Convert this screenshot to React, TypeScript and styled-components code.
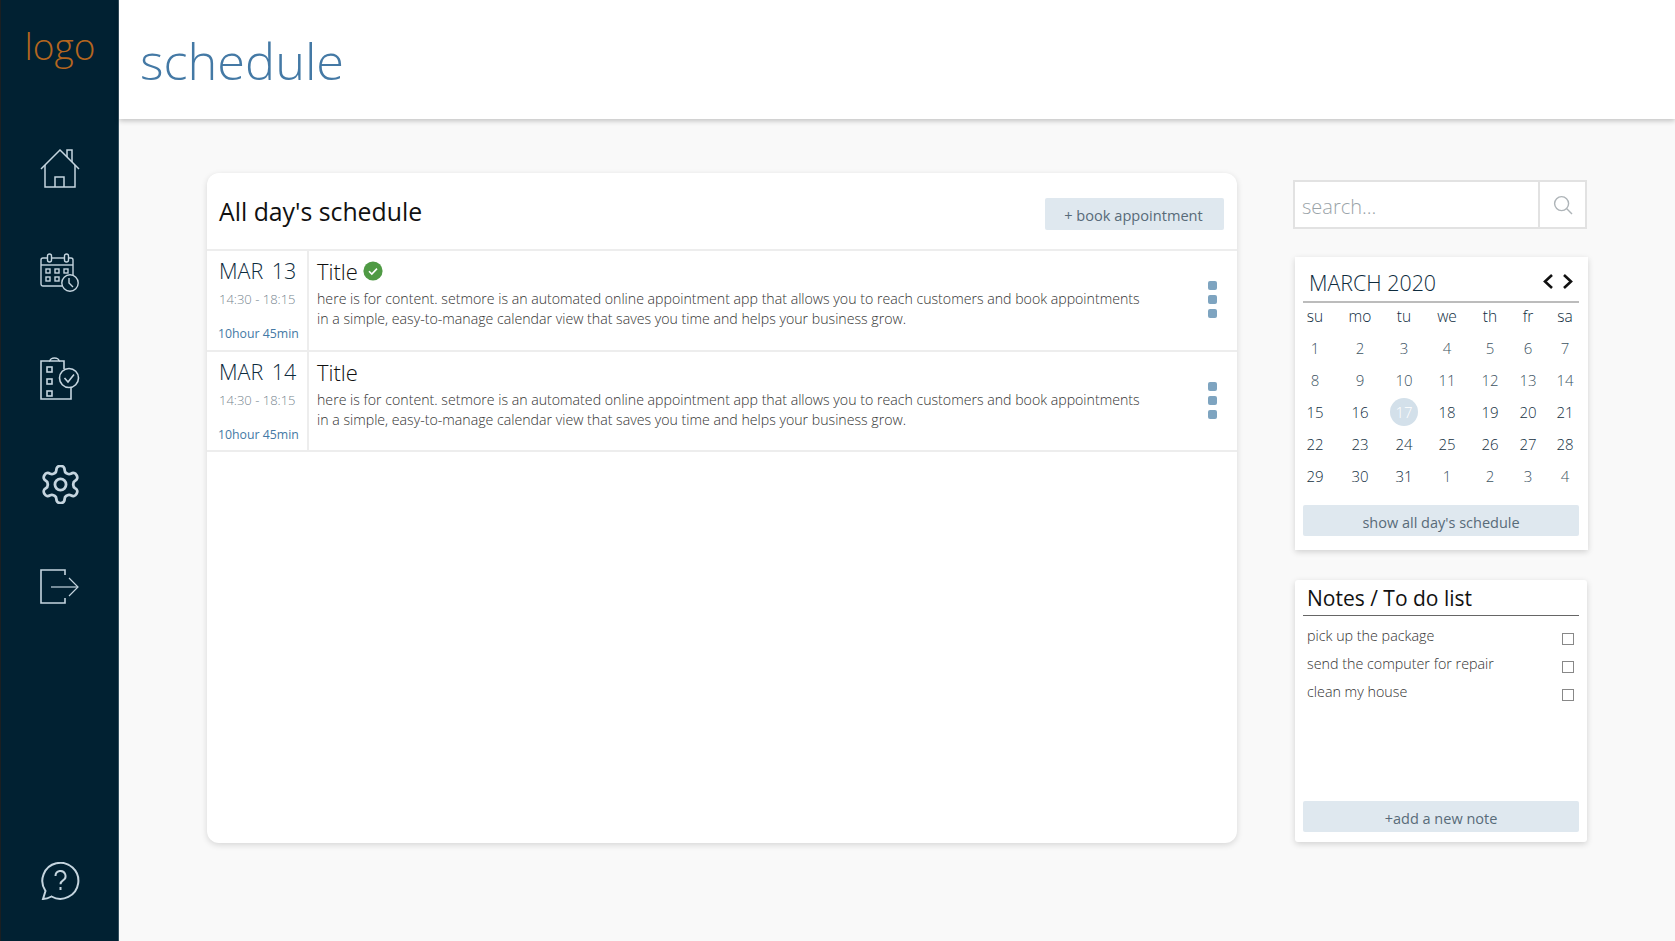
import React from "react";
import styled, { createGlobalStyle } from "styled-components";

const GlobalStyle = createGlobalStyle`
  html, body {
    margin: 0;
    padding: 0;
    height: 100%;
    background: #f9f9f9;
    font-family: "Open Sans", "Noto Sans", sans-serif;
  }
  #root {
    height: 100%;
  }
  * {
    box-sizing: border-box;
  }
`;

const appointments = [
  { id: 1, date: "MAR 13", done: true },
  { id: 2, date: "MAR 14", done: false },
];

const weekDays = ["su", "mo", "tu", "we", "th", "fr", "sa"];

const calendarDays = [
  1, 2, 3, 4, 5, 6, 7, 8, 9, 10, 11, 12, 13, 14, 15, 16, 17, 18, 19, 20, 21, 22, 23, 24, 25, 26, 27, 28, 29, 30, 31,
  1, 2, 3, 4,
];

const notes = ["pick up the package", "send the computer for repair", "clean my house"];

const HomeIcon = () => (
  <svg width="40" height="39" viewBox="0 0 40 39" fill="none" stroke="#c5d5df" strokeWidth="1.5">
    <path d="M1 20 L20 1 L39 20" />
    <path d="M5 16 V38 H35 V16" />
    <path d="M15 38 V28 H24 V38" />
    <path d="M27 8 V1 H32 V13" />
  </svg>
);

const CalendarIcon = () => (
  <svg width="40" height="39" viewBox="0 0 40 39" fill="none" stroke="#c5d5df" strokeWidth="1.4">
    <path d="M22 33 H3 a2 2 0 0 1 -2 -2 V7 a2 2 0 0 1 2 -2 H7" />
    <path d="M12 5 H24" />
    <path d="M29 5 H31 a2 2 0 0 1 2 2 V22" />
    <path d="M1 12 H33" />
    <rect x="7.5" y="1" width="4" height="8" rx="2" />
    <rect x="24.5" y="1" width="4" height="8" rx="2" />
    <rect x="6" y="16" width="4" height="4" />
    <rect x="15" y="16" width="4" height="4" />
    <rect x="24" y="16" width="4" height="4" />
    <rect x="6" y="24" width="4" height="4" />
    <rect x="15" y="24" width="4" height="4" />
    <circle cx="30" cy="30" r="8.2" />
    <path d="M29 25 V30 L33 34" />
  </svg>
);

const ChecklistIcon = () => (
  <svg width="40" height="43" viewBox="0 0 40 43" fill="none" stroke="#c5d5df" strokeWidth="1.6">
    <path d="M24 12 V4 H19" />
    <path d="M10 4 H1 V42 H31 V31" />
    <path d="M10 4 a4.5 3 0 0 1 9 0 Z" />
    <rect x="7" y="10" width="5" height="5" />
    <rect x="7" y="22" width="5" height="5" />
    <rect x="7" y="34" width="5" height="5" />
    <circle cx="29" cy="21" r="9.5" />
    <path d="M24.5 21 L28 25 L34 17.5" />
  </svg>
);

const GearIcon = () => (
  <svg width="39" height="39" viewBox="1.5 1.5 21 21" fill="none" stroke="#c5d5df" strokeWidth="1.5">
    <path d="M12.22 2h-.44a2 2 0 0 0-2 2v.18a2 2 0 0 1-1 1.73l-.43.25a2 2 0 0 1-2 0l-.15-.08a2 2 0 0 0-2.73.73l-.22.38a2 2 0 0 0 .73 2.73l.15.1a2 2 0 0 1 1 1.72v.51a2 2 0 0 1-1 1.74l-.15.09a2 2 0 0 0-.73 2.73l.22.38a2 2 0 0 0 2.73.73l.15-.08a2 2 0 0 1 2 0l.43.25a2 2 0 0 1 1 1.73V20a2 2 0 0 0 2 2h.44a2 2 0 0 0 2-2v-.18a2 2 0 0 1 1-1.73l.43-.25a2 2 0 0 1 2 0l.15.08a2 2 0 0 0 2.73-.73l.22-.39a2 2 0 0 0-.73-2.73l-.15-.08a2 2 0 0 1-1-1.74v-.5a2 2 0 0 1 1-1.74l.15-.09a2 2 0 0 0 .73-2.73l-.22-.38a2 2 0 0 0-2.73-.73l-.15.08a2 2 0 0 1-2 0l-.43-.25a2 2 0 0 1-1-1.73V4a2 2 0 0 0-2-2z" />
    <circle cx="12" cy="12" r="3" />
  </svg>
);

const LogoutIcon = () => (
  <svg width="40" height="35" viewBox="0 0 40 35" fill="none" stroke="#c5d5df" strokeWidth="1.6">
    <path d="M25 6 V1 H1 V34 H25 V29" />
    <path d="M11 18 H38" strokeWidth="1.2" />
    <path d="M29 9 L38 18 L29 27" strokeWidth="1.2" />
  </svg>
);

const HelpIcon = () => (
  <svg width="39" height="38" viewBox="0 0 39 38" fill="none" stroke="#c5d5df" strokeWidth="2">
    <path d="M2 37 L4.5 29 A18 18 0 1 1 10.5 34.5 Q6 37 2 37 Z" />
    <path d="M14.5 14 a5 5 0 1 1 7.5 4.3 c-1.6 1 -2.5 1.8 -2.5 4" />
    <path d="M19.5 25 V28" />
  </svg>
);

const CheckBadge = () => (
  <svg width="20" height="20" viewBox="0 0 20 20">
    <circle cx="10" cy="10" r="9.6" fill="#4f9a44" />
    <path d="M6 10.2 L8.8 13 L14 7.6" fill="none" stroke="#fff" strokeWidth="1.6" />
  </svg>
);

const SearchIcon = () => (
  <svg width="20" height="20" viewBox="0 0 20 20" fill="none" stroke="#aeb4b8" strokeWidth="1.4">
    <circle cx="8.6" cy="8.6" r="7" />
    <path d="M13.8 13.8 L19 19" />
  </svg>
);

const Chevron = ({ flip }: { flip?: boolean }) => (
  <svg width="11" height="15" viewBox="0 0 11 15" fill="none" stroke="#111" strokeWidth="2.6">
    <path d={flip ? "M2 1 L9 7.5 L2 14" : "M9 1 L2 7.5 L9 14"} />
  </svg>
);

export default function App() {
  return (
    <>
      <GlobalStyle />
      <Page>
        <Sidebar>
          <Logo>logo</Logo>
          <Nav>
            <HomeIcon />
            <CalendarIcon />
            <ChecklistIcon />
            <GearIcon />
            <LogoutIcon />
          </Nav>
          <HelpSlot>
            <HelpIcon />
          </HelpSlot>
        </Sidebar>
        <Body>
          <Header>
            <PageTitle>schedule</PageTitle>
          </Header>
          <Content>
            <ScheduleCard>
              <ScheduleHead>
                <ScheduleTitle>All day's schedule</ScheduleTitle>
                <BookButton>+ book appointment</BookButton>
              </ScheduleHead>
              {appointments.map((item) => (
                <Row key={item.id}>
                  <DateCol>
                    <DateText>{item.date}</DateText>
                    <TimeText>14:30 - 18:15</TimeText>
                    <Duration>10hour 45min</Duration>
                  </DateCol>
                  <RowBody>
                    <RowTitle>
                      Title
                      {item.done && <CheckBadge />}
                    </RowTitle>
                    <RowText>
                      here is for content. setmore is an automated online appointment app that allows you to reach customers and book appointments in a simple, easy-to-manage calendar view that saves you time and helps your business grow.
                    </RowText>
                  </RowBody>
                  <Dots>
                    <Dot />
                    <Dot />
                    <Dot />
                  </Dots>
                </Row>
              ))}
            </ScheduleCard>
            <SideCol>
              <SearchBox>
                <SearchInput placeholder="search..." />
                <SearchButton>
                  <SearchIcon />
                </SearchButton>
              </SearchBox>
              <CalendarCard>
                <CalendarHead>
                  <MonthLabel>MARCH 2020</MonthLabel>
                  <Arrows>
                    <Chevron />
                    <Chevron flip />
                  </Arrows>
                </CalendarHead>
                <DayGrid>
                  {weekDays.map((day) => (
                    <WeekDay key={day}>{day}</WeekDay>
                  ))}
                  {calendarDays.map((day, index) => (
                    <DayCell key={index} $today={index === 16} $muted={index < 14 || index > 30}>
                      {day}
                    </DayCell>
                  ))}
                </DayGrid>
                <WideButton>show all day's schedule</WideButton>
              </CalendarCard>
              <NotesCard>
                <NotesTitle>Notes / To do list</NotesTitle>
                <NotesList>
                  {notes.map((note) => (
                    <NoteRow key={note}>
                      <span>{note}</span>
                      <NoteCheck type="checkbox" />
                    </NoteRow>
                  ))}
                </NotesList>
                <WideButton>+add a new note</WideButton>
              </NotesCard>
            </SideCol>
          </Content>
        </Body>
      </Page>
    </>
  );
}

// Styled Components

const Page = styled.div`
  display: flex;
  height: 941px;
  overflow: hidden;
`;

const Sidebar = styled.aside`
  width: 119px;
  flex-shrink: 0;
  display: flex;
  flex-direction: column;
  align-items: center;
  padding-left: 1px;
  background: #012132;
  border-left: 1px solid #1a1f22;
  border-right: 1px solid #34505f;
`;

const Logo = styled.div`
  height: 149px;
  padding-top: 23px;
  font-size: 37px;
  line-height: 46px;
  font-weight: 300;
  color: #b5661f;
`;

const Nav = styled.nav`
  display: flex;
  flex-direction: column;
  align-items: center;
  gap: 65px;
`;

const HelpSlot = styled.div`
  margin-top: auto;
  padding-bottom: 41px;
  display: flex;
`;

const Body = styled.div`
  flex: 1;
  display: flex;
  flex-direction: column;
  min-width: 0;
`;

const Header = styled.header`
  height: 119px;
  flex-shrink: 0;
  padding: 28px 0 0 21px;
  background: #fff;
  box-shadow: 0 2px 5px rgba(0, 0, 0, 0.22);
`;

const PageTitle = styled.h1`
  margin: 0;
  font-size: 50.5px;
  line-height: 66px;
  font-weight: 300;
  color: #4479a5;
`;

const Content = styled.main`
  display: flex;
  align-items: flex-start;
  gap: 56px;
  padding: 54px 0 0 88px;
`;

const ScheduleCard = styled.section`
  width: 1030px;
  height: 670px;
  flex-shrink: 0;
  background: #fff;
  border-radius: 12px;
  box-shadow: 0 2px 6px rgba(0, 0, 0, 0.14);
`;

const ScheduleHead = styled.div`
  height: 78px;
  padding: 22px 13px 0 12px;
  display: flex;
  justify-content: space-between;
  align-items: flex-start;
  border-bottom: 2px solid #ededed;
`;

const ScheduleTitle = styled.h2`
  margin: 0;
  font-size: 24.8px;
  line-height: 32px;
  font-weight: 400;
  color: #111;
`;

const BookButton = styled.button`
  width: 179px;
  height: 32px;
  margin-top: 3px;
  padding: 2px 2px 0 0;
  border: none;
  border-radius: 2px;
  background: #dfe8ef;
  font-family: inherit;
  font-size: 14.6px;
  font-weight: 400;
  color: #586b79;
`;

const Row = styled.article`
  height: 100.6px;
  display: flex;
  border-bottom: 2px solid #ededed;
`;

const DateCol = styled.div`
  width: 102px;
  flex-shrink: 0;
  padding: 5px 0 0 12px;
  display: flex;
  flex-direction: column;
  border-right: 2px solid #ededed;
`;

const DateText = styled.div`
  font-size: 21.5px;
  line-height: 30px;
  font-weight: 300;
  word-spacing: 3px;
  color: #0d2b3d;
  white-space: nowrap;
`;

const TimeText = styled.div`
  margin-top: 3px;
  font-size: 13px;
  line-height: 20px;
  font-weight: 300;
  color: #77868f;
  white-space: nowrap;
`;

const Duration = styled.div`
  margin-top: 16px;
  margin-left: -1px;
  font-size: 12.3px;
  line-height: 18px;
  color: #4479a5;
  white-space: nowrap;
`;

const RowBody = styled.div`
  width: 848px;
  flex-shrink: 0;
  padding: 5px 0 0 8px;
`;

const RowTitle = styled.div`
  display: flex;
  align-items: center;
  gap: 5px;
  height: 30px;
  font-size: 22px;
  line-height: 30px;
  font-weight: 300;
  color: #111;
`;

const RowText = styled.p`
  margin: 3px 0 0;
  max-width: 830px;
  font-size: 14.16px;
  line-height: 20px;
  font-weight: 300;
  color: #333;
`;

const Dots = styled.div`
  margin: 30px 0 0 51px;
  display: flex;
  flex-direction: column;
  gap: 5px;
`;

const Dot = styled.span`
  width: 9px;
  height: 9px;
  border-radius: 2px;
  background: #7ea4c0;
`;

const SideCol = styled.div`
  width: 296px;
  flex-shrink: 0;
  padding-top: 7px;
  display: flex;
  flex-direction: column;
`;

const SearchBox = styled.div`
  width: 294px;
  height: 49px;
  display: flex;
  background: #fff;
  border: 2px solid #e2e2e2;
`;

const SearchInput = styled.input`
  flex: 1;
  min-width: 0;
  padding: 4px 0 0 7px;
  border: none;
  outline: none;
  background: transparent;
  font-family: inherit;
  font-size: 20px;
  font-weight: 300;

  &::placeholder {
    color: #9aa3a8;
    opacity: 1;
  }
`;

const SearchButton = styled.div`
  width: 47px;
  display: flex;
  align-items: center;
  justify-content: center;
  border-left: 2px solid #e2e2e2;
`;

const CalendarCard = styled.section`
  margin: 28px 0 0 2px;
  width: 293px;
  height: 293px;
  padding: 0 9px 0 8px;
  background: #fff;
  box-shadow: 0 2px 6px rgba(0, 0, 0, 0.16);
`;

const CalendarHead = styled.div`
  height: 46px;
  padding: 11px 6px 0 6px;
  display: flex;
  justify-content: space-between;
  align-items: flex-start;
  border-bottom: 2px solid #bcbcbc;
`;

const MonthLabel = styled.div`
  font-size: 21.4px;
  line-height: 30px;
  font-weight: 300;
  color: #0d2b3d;
`;

const Arrows = styled.div`
  margin-top: 6px;
  display: flex;
  gap: 8px;
`;

const DayGrid = styled.div`
  margin: 0 -9px 0 -8px;
  height: 198px;
  display: grid;
  grid-template-columns: 40px 50px 38px 48px 38px 38px 36px;
  grid-template-rows: 26px repeat(5, 32px);
  align-content: start;
  align-items: center;
  justify-items: center;
`;

const WeekDay = styled.div`
  font-size: 15.5px;
  font-weight: 300;
  color: #0d2b3d;
`;

const DayCell = styled.div<{ $today?: boolean; $muted?: boolean }>`
  width: 28px;
  height: 28px;
  display: flex;
  align-items: center;
  justify-content: center;
  margin-top: 6px;
  border-radius: 50%;
  font-size: 15px;
  font-weight: 300;
  color: ${(p) => (p.$today ? "#fff" : p.$muted ? "#3d5362" : "#14303f")};
  background: ${(p) => (p.$today ? "#d3e0ea" : "transparent")};
`;

const WideButton = styled.button`
  display: block;
  width: 276px;
  height: 31px;
  margin-top: 4px;
  padding: 3px 0 0;
  border: none;
  border-radius: 2px;
  background: #dfe8ef;
  font-family: inherit;
  font-size: 14.5px;
  font-weight: 400;
  color: #586b79;
`;

const NotesCard = styled.section`
  margin: 30px 0 0 2px;
  width: 292px;
  height: 262px;
  padding: 0 8px 10px 8px;
  display: flex;
  flex-direction: column;
  background: #fff;
  border-radius: 3px;
  box-shadow: 0 2px 6px rgba(0, 0, 0, 0.16);
`;

const NotesTitle = styled.h3`
  margin: 0;
  height: 36px;
  padding-left: 4px;
  font-size: 21px;
  line-height: 37px;
  font-weight: 400;
  color: #111;
  border-bottom: 1px solid #666;
`;

const NotesList = styled.div`
  flex: 1;
  padding: 6px 5px 0 4px;
`;

const NoteRow = styled.div`
  display: flex;
  justify-content: space-between;
  height: 28px;
  font-size: 14.3px;
  line-height: 28px;
  font-weight: 300;
  color: #333;
`;

const NoteCheck = styled.input`
  appearance: none;
  width: 12px;
  height: 12px;
  margin: 11px 0 0;
  border: 1px solid #888;
  background: #fff;
`;
